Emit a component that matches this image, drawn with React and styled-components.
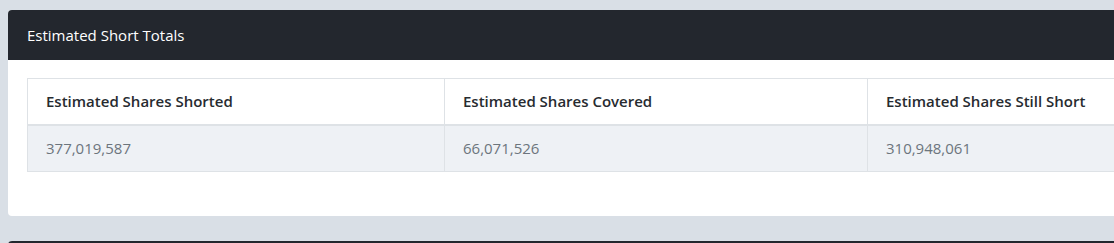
import styled, { createGlobalStyle } from "styled-components"

const GlobalStyle = createGlobalStyle`
    html, body {
        margin: 0;
        background: #d9dfe6;
        font-family: "Open Sans", "Liberation Sans", sans-serif;
        overflow: hidden;
    }
`

const Page = styled.div`
    padding: 10px 0 0 8px;
    height: 243px;
    box-sizing: border-box;
    overflow: hidden;
`

const Card = styled.div`
    background: #ffffff;
    border-radius: 4px;
    overflow: hidden;
    margin-bottom: 25px;
    width: 1300px;
`

const CardHeader = styled.div`
    background: #23272e;
    color: #ffffff;
    height: 50px;
    display: flex;
    align-items: center;
    padding: 0 19px;
    font-size: 15px;
`

const CardBody = styled.div`
    padding: 18px 19px 44px;
`

const Table = styled.table`
    border-collapse: collapse;
    table-layout: fixed;
    width: 1262px;
    font-size: 15px;
`

const Th = styled.th`
    width: ${(p) => p.$w}px;
    text-align: left;
    font-weight: 600;
    color: #272b30;
    height: 46px;
    padding: 0 18px;
    border: 1px solid #dee2e6;
    border-bottom-width: 2px;
    box-sizing: border-box;
`

const Td = styled.td`
    background: #eef1f5;
    color: #6c757d;
    height: 47px;
    padding: 0 18px;
    border: 1px solid #dee2e6;
    box-sizing: border-box;
`

const NextCard = styled.div`
    background: #23272e;
    border-radius: 4px 4px 0 0;
    height: 40px;
    width: 1300px;
`

const columns = [
    { title: "Estimated Shares Shorted", value: "377,019,587", w: 417 },
    { title: "Estimated Shares Covered", value: "66,071,526", w: 423 },
    { title: "Estimated Shares Still Short", value: "310,948,061", w: 422 },
]

export default function App() {
    return (
        <Page>
            <GlobalStyle />
            <Card>
                <CardHeader>Estimated Short Totals</CardHeader>
                <CardBody>
                    <Table>
                        <thead>
                            <tr>
                                {columns.map((c) => (
                                    <Th key={c.title} $w={c.w}>{c.title}</Th>
                                ))}
                            </tr>
                        </thead>
                        <tbody>
                            <tr>
                                {columns.map((c) => (
                                    <Td key={c.title}>{c.value}</Td>
                                ))}
                            </tr>
                        </tbody>
                    </Table>
                </CardBody>
            </Card>
            <NextCard />
        </Page>
    )
}
